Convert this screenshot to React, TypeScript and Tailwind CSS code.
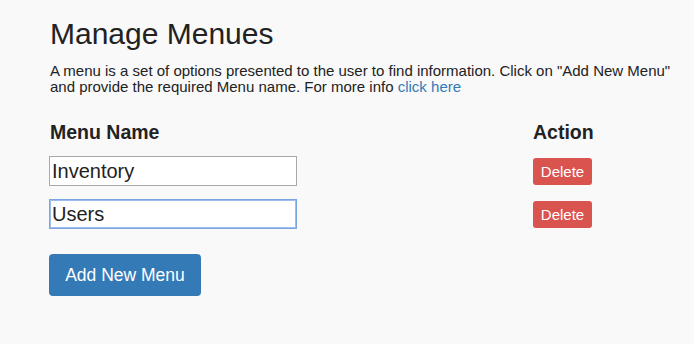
import { useState } from "react";

const rows = ["Inventory", "Users"];

export default function App() {
  const [menus, setMenus] = useState(rows);

  return (
    <div className="min-h-[344px] w-full bg-[#f9f9f9] font-['Liberation_Sans',Arial,sans-serif] text-[#222]">
      <div className="pl-[49px] pt-[17px] pr-4">
        <h1 className="ml-px text-[30px] leading-[33px] text-[#222]">Manage Menues</h1>
        <p className="ml-px mt-[13px] text-[15px] leading-[16px] text-[#222]">
          A menu is a set of options presented to the user to find information. Click on "Add New Menu"
          <br />
          and provide the required Menu name. For more info{" "}
          <a href="#" className="text-[#337ab7]">
            click here
          </a>
        </p>

        <div className="mt-[26px] grid grid-cols-[484px_1fr] items-center">
          <div className="ml-px text-[19.5px] font-bold leading-[22px]">Menu Name</div>
          <div className="text-[19.5px] font-bold leading-[22px]">Action</div>
        </div>

        <div className="mt-[13px] flex flex-col gap-[13px]">
          {menus.map((m, i) => (
            <div key={i} className="grid grid-cols-[484px_1fr] items-center">
              <input
                value={m}
                onChange={(e) => {
                  const next = [...menus];
                  next[i] = e.target.value;
                  setMenus(next);
                }}
                className={`h-[30px] w-[248px] border bg-white px-[2px] text-[20px] text-[#222] outline-none ${
                  i === 1 ? "border-[#7ba5e0] shadow-[0_0_0_1px_#9dbdf0_inset]" : "border-[#a9a9a9]"
                }`}
              />
              <button className="h-[27px] w-[59px] rounded-[3px] bg-[#d9534f] text-[15px] leading-none text-white">
                Delete
              </button>
            </div>
          ))}
        </div>

        <button className="mt-[25px] h-[42px] w-[152px] rounded-[4px] bg-[#337ab7] text-[17.5px] text-white">
          Add New Menu
        </button>
      </div>
    </div>
  );
}
